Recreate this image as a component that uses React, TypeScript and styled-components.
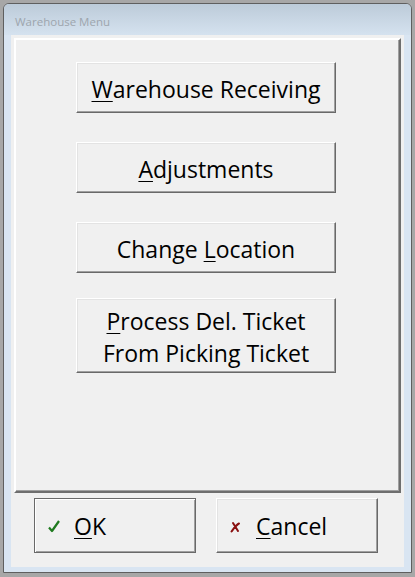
import styled, { createGlobalStyle } from "styled-components";

const GlobalStyle = createGlobalStyle`
  html, body {
    margin: 0;
    padding: 0;
    background: #a7a7a7;
  }
  * {
    box-sizing: border-box;
  }
`;

const App = () => {
  return (
    <>
      <GlobalStyle />
      <Window>
        <Frame>
          <TitleBar>
            <TitleText>Warehouse Menu</TitleText>
          </TitleBar>
          <Client>
            <Panel>
              <MenuButton>
                <Caption>
                  <Key>W</Key>arehouse Receiving
                </Caption>
              </MenuButton>
              <MenuButton>
                <Caption>
                  <Key>A</Key>djustments
                </Caption>
              </MenuButton>
              <MenuButton>
                <Caption>
                  Change <Key>L</Key>ocation
                </Caption>
              </MenuButton>
              <MenuButton $tall>
                <Caption>
                  <Key>P</Key>rocess Del. Ticket
                  <br />
                  From Picking Ticket
                </Caption>
              </MenuButton>
            </Panel>
            <Footer>
              <DialogButton $default>
                <IconSlot>
                  <svg width="12" height="13" viewBox="0 0 12 13">
                    <path
                      d="M1 7.5 L4 11 L11 1"
                      fill="none"
                      stroke="#1f7a1f"
                      strokeWidth="2.2"
                      strokeLinejoin="round"
                    />
                  </svg>
                </IconSlot>
                <Label>
                  <Key>O</Key>K
                </Label>
              </DialogButton>
              <DialogButton>
                <IconSlot>
                  <svg width="11" height="12" viewBox="0 0 11 12">
                    <path
                      d="M3 2 L8 10 M9 2.5 C6 4 4 7 1.5 10.5"
                      fill="none"
                      stroke="#8a1010"
                      strokeWidth="2"
                      strokeLinecap="round"
                    />
                  </svg>
                </IconSlot>
                <Label>
                  <Key>C</Key>ancel
                </Label>
              </DialogButton>
            </Footer>
          </Client>
        </Frame>
      </Window>
    </>
  );
};

const Window = styled.div`
  width: 415px;
  height: 577px;
  padding: 3px 3px 4px 3px;
  background: #a7a7a7;
  font-family: "Open Sans", "Noto Sans", sans-serif;
`;

const Frame = styled.div`
  height: 100%;
  display: flex;
  flex-direction: column;
  border: 1px solid #5f5f5f;
  border-radius: 6px 6px 0 0;
  background: #d9e5f2;
  padding: 0 7px 5px 7px;
`;

const TitleBar = styled.div`
  height: 31px;
  margin: 0 -7px;
  padding: 4px 11px 0 11px;
  display: flex;
  align-items: center;
  border-radius: 5px 5px 0 0;
  background: linear-gradient(#bccbd9, #d5e2ef);
`;

const TitleText = styled.span`
  font-size: 11.5px;
  color: #9da5ad;
`;

const Client = styled.div`
  flex: 1;
  display: flex;
  flex-direction: column;
  background: #f0f0f0;
  padding: 3px 3px 0 3px;
`;

const Panel = styled.div`
  height: 455px;
  display: flex;
  flex-direction: column;
  align-items: flex-start;
  gap: 29px;
  padding: 22px 0 0 60px;
  border-top: 2px solid #ffffff;
  border-left: 2px solid #ffffff;
  border-right: 2px solid #6e6e6e;
  border-bottom: 2px solid #6e6e6e;
  box-shadow: inset -1px -1px 0 #a0a0a0;
`;

const MenuButton = styled.div<{ $tall?: boolean }>`
  width: 260px;
  height: ${(p) => (p.$tall ? "75px" : "51px")};
  margin-top: ${(p) => (p.$tall ? "-4px" : "0")};
  display: flex;
  align-items: center;
  justify-content: center;
  background: #f0f0f0;
  border-top: 1px solid #ffffff;
  border-left: 1px solid #ffffff;
  border-right: 1px solid #696969;
  border-bottom: 1px solid #696969;
  box-shadow: inset -1px -1px 0 #a0a0a0, inset 1px 1px 0 #e3e3e3;
  padding-top: 2px;
`;

const Caption = styled.span`
  display: block;
  text-align: center;
  font-size: 23px;
  line-height: 32px;
  color: #000;
`;

const Key = styled.u`
  text-decoration-thickness: 1px;
  text-underline-offset: 3px;
`;

const Footer = styled.div`
  display: flex;
  gap: 20px;
  padding: 5px 0 0 20px;
`;

const DialogButton = styled.div<{ $default?: boolean }>`
  width: 162px;
  height: 55px;
  display: flex;
  align-items: center;
  padding-left: 13px;
  background: #f0f0f0;
  border: 1px solid ${(p) => (p.$default ? "#696969" : "#ffffff")};
  border-right-color: #696969;
  border-bottom-color: #696969;
  box-shadow: ${(p) =>
    p.$default
      ? "inset 1px 1px 0 #ffffff, inset -1px -1px 0 #a0a0a0"
      : "inset -1px -1px 0 #a0a0a0, inset 1px 1px 0 #e3e3e3"};
`;

const IconSlot = styled.span`
  width: 26px;
  display: flex;
  align-items: center;
  margin-top: 2px;
`;

const Label = styled.span`
  font-size: 23px;
  line-height: 32px;
  color: #000;
`;

export default App;
